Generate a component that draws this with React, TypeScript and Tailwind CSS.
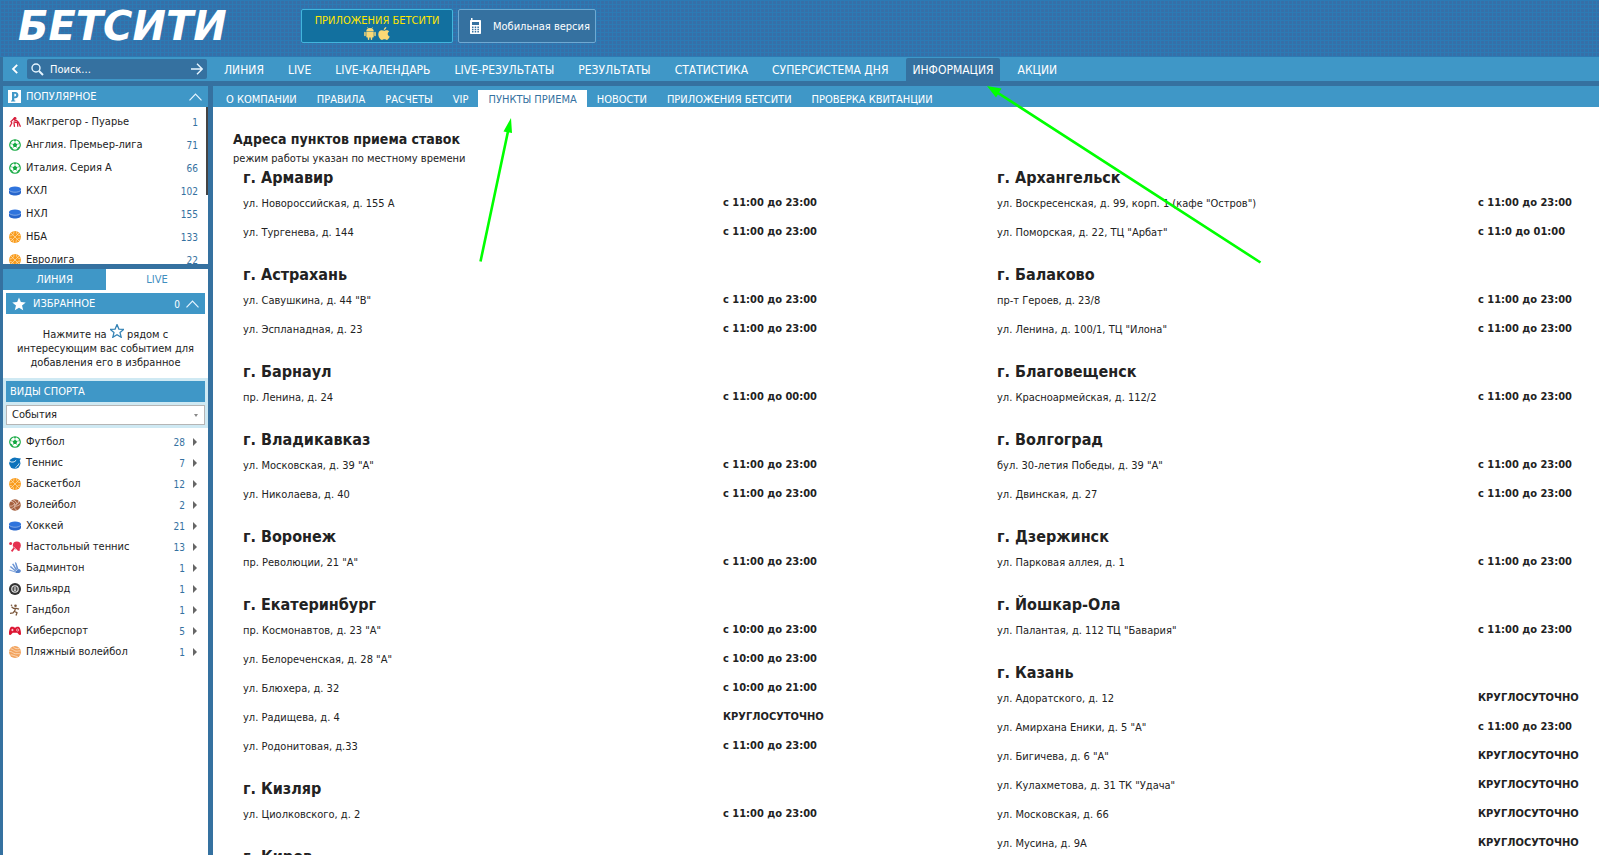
import type { ReactNode } from "react";

type Point = [address: string, hours: string];
type City = { name: string; points: Point[] };

const DAY = "с 11:00 до 23:00";
const ALL_DAY = "КРУГЛОСУТОЧНО";

const leftCities: City[] = [
  { name: "г. Армавир", points: [["ул. Новороссийская, д. 155 А", DAY], ["ул. Тургенева, д. 144", DAY]] },
  { name: "г. Астрахань", points: [['ул. Савушкина, д. 44 "В"', DAY], ["ул. Эспланадная, д. 23", DAY]] },
  { name: "г. Барнаул", points: [["пр. Ленина, д. 24", "с 11:00 до 00:00"]] },
  { name: "г. Владикавказ", points: [['ул. Московская, д. 39 "А"', DAY], ["ул. Николаева, д. 40", DAY]] },
  { name: "г. Воронеж", points: [['пр. Революции, 21 "А"', DAY]] },
  {
    name: "г. Екатеринбург",
    points: [
      ['пр. Космонавтов, д. 23 "А"', "с 10:00 до 23:00"],
      ['ул. Белореченская, д. 28 "А"', "с 10:00 до 23:00"],
      ["ул. Блюхера, д. 32", "с 10:00 до 21:00"],
      ["ул. Радищева, д. 4", ALL_DAY],
      ["ул. Родонитовая, д.33", DAY],
    ],
  },
  { name: "г. Кизляр", points: [["ул. Циолковского, д. 2", DAY]] },
  { name: "г. Киров", points: [] },
];

const rightCities: City[] = [
  {
    name: "г. Архангельск",
    points: [
      ['ул. Воскресенская, д. 99, корп. 1 (кафе "Остров")', DAY],
      ['ул. Поморская, д. 22, ТЦ "Арбат"', "с 11:0 до 01:00"],
    ],
  },
  { name: "г. Балаково", points: [["пр-т Героев, д. 23/8", DAY], ['ул. Ленина, д. 100/1, ТЦ "Илона"', DAY]] },
  { name: "г. Благовещенск", points: [["ул. Красноармейская, д. 112/2", DAY]] },
  { name: "г. Волгоград", points: [['бул. 30-летия Победы, д. 39 "А"', DAY], ["ул. Двинская, д. 27", DAY]] },
  { name: "г. Дзержинск", points: [["ул. Парковая аллея, д. 1", DAY]] },
  { name: "г. Йошкар-Ола", points: [['ул. Палантая, д. 112 ТЦ "Бавария"', DAY]] },
  {
    name: "г. Казань",
    points: [
      ["ул. Адоратского, д. 12", ALL_DAY],
      ['ул. Амирхана Еники, д. 5 "А"', DAY],
      ['ул. Бигичева, д. 6 "А"', ALL_DAY],
      ['ул. Кулахметова, д. 31 ТК "Удача"', ALL_DAY],
      ["ул. Московская, д. 66", ALL_DAY],
      ["ул. Мусина, д. 9А", ALL_DAY],
    ],
  },
];

const mainNav = ["ЛИНИЯ", "LIVE", "LIVE-КАЛЕНДАРЬ", "LIVE-РЕЗУЛЬТАТЫ", "РЕЗУЛЬТАТЫ", "СТАТИСТИКА", "СУПЕРСИСТЕМА ДНЯ", "ИНФОРМАЦИЯ", "АКЦИИ"];
const subNav = ["О КОМПАНИИ", "ПРАВИЛА", "РАСЧЕТЫ", "VIP", "ПУНКТЫ ПРИЕМА", "НОВОСТИ", "ПРИЛОЖЕНИЯ БЕТСИТИ", "ПРОВЕРКА КВИТАНЦИИ"];

function Icon({ children }: { children: ReactNode }) {
  return (
    <svg viewBox="0 0 12 12" className="size-3 shrink-0" fill="none" aria-hidden="true">
      {children}
    </svg>
  );
}

const Football = () => (
  <Icon>
    <circle cx="6" cy="6" r="5.3" stroke="#12a83f" strokeWidth="1.1" />
    <path d="M6 3.7 8.2 5.3 7.4 7.9H4.6L3.8 5.3Z" fill="#12a83f" />
    <path d="M6 .8V3.7M8.2 5.3 11 4.4M7.4 7.9 9 10.3M4.6 7.9 3 10.3M3.8 5.3 1 4.4" stroke="#12a83f" strokeWidth=".6" />
    <path d="M4.2.9 6 2 7.8.9ZM1 7.5l1.8.6.4 2.2ZM11 7.5l-1.8.6-.4 2.2Z" fill="#12a83f" />
  </Icon>
);
const Puck = () => (
  <Icon>
    <path d="M0 4.2v3.6C0 9.300 2.700 10.500 6 10.500s6-1.200 6-2.700V4.200Z" fill="#2766cc" />
    <ellipse cx="6" cy="4.2" rx="6" ry="2.600" fill="#2f74dd" />
    <path d="M.2 5.200C1 6.400 3.300 7.200 6 7.200s5-.8 5.800-2" stroke="#a9c8f5" strokeWidth=".7" />
  </Icon>
);
const Basketball = () => (
  <Icon>
    <circle cx="6" cy="6" r="6" fill="#f99b1c" />
    <path d="M2 2 10 10M10 2 2 10M.3 5C3 5.400 5.400 3 5 .3M11.700 7C9 6.600 6.600 9 7 11.700M7.500.4C7.200 3 9 4.900 11.600 4.700M4.500 11.600C4.800 9 3 7.100.4 7.300" stroke="#ffe3b5" strokeWidth=".7" />
  </Icon>
);
const Tennis = () => (
  <Icon>
    <circle cx="5.800" cy="6.200" r="5.600" fill="#0d73bb" />
    <path d="M.2 4.200C3 5.800 5.400 5.300 7.200 3.200" stroke="#fff" strokeWidth=".9" />
    <path d="M6.500 10.500C7.500 10 9.500 8 10 6.500" stroke="#fff" strokeWidth=".9" />
    <path d="M7.500 1 12 1.500 10 4.600Z" fill="#0d73bb" />
  </Icon>
);
const Volleyball = () => (
  <Icon>
    <circle cx="6" cy="6" r="5.800" fill="#a5603e" />
    <path d="M6 6C5.500 3.500 3.500 2 1.500 2.500M6 6C8.500 5.500 10 3.500 9.500 1.500M6 6C5 8.500 6 10.500 8 11.500M4 .8C6 1.500 7.500 3 7.800 5M11.500 5C9.500 6.800 7.500 7.300 5.500 7.200M.6 7C3 7.500 4.600 6.500 5.600 4.600M2 10C3 9.800 4.200 9 5 7.800" stroke="#f3ddd0" strokeWidth=".7" />
  </Icon>
);
const TableTennis = () => (
  <Icon>
    <circle cx="7.800" cy="4.600" r="4" fill="#e5304f" />
    <path d="M7.500 8 10.500 7 11 9.500 9 10Z" fill="#e5304f" />
    <path d="M5 7.300 2.600 10.400" stroke="#e5304f" strokeWidth="1.800" />
    <circle cx="1.600" cy="2.400" r="1.500" fill="#e5304f" />
    <path d="M4.300 5.700 7.700 8.700" stroke="#fff" strokeWidth=".6" />
  </Icon>
);
const Badminton = () => (
  <Icon>
    <path d="M5.800.3 7.300.8 9.500 7 7.800 7.800ZM3 2 4.600 1.600 8 7.600 6.800 8.400ZM.8 5 2 4 7 8.500 6.300 9.500ZM0 8.500.8 7.400 6.500 9.600 6.300 10.600Z" fill="#86a9df" />
    <path d="M6.500.5 8.700 7.500M3.800 2 7.500 8M1.400 4.700 6.700 9" stroke="#4f7cc4" strokeWidth=".5" />
    <path d="M6.500 9.500 9.500 7C11 7 12 8 11.800 9.200 11.500 10.800 9 11.600 6.500 10.800Z" fill="#5583cc" />
  </Icon>
);
const Billiards = () => (
  <Icon>
    <circle cx="6" cy="6" r="6" fill="#333" />
    <circle cx="6" cy="6" r="3.800" fill="#e8e8e8" />
    <circle cx="6" cy="6" r="2.700" fill="#555" />
    <circle cx="6" cy="5" r=".8" fill="#fff" />
    <circle cx="6" cy="7.100" r=".9" fill="#fff" />
  </Icon>
);
const Handball = () => (
  <Icon>
    <circle cx="6.500" cy="1.700" r="1.300" fill="#7a563a" />
    <circle cx="2.500" cy="1.200" r=".8" fill="#7a563a" />
    <path d="M2.500 2.800 4.500 4.300H7.300L10 5.200M6.400 4.300 5.600 7.400 8 8.800 7 11.500M5.500 7.200 4 9 1 9.400" stroke="#7a563a" strokeWidth="1.300" />
  </Icon>
);
const Gamepad = () => (
  <Icon>
    <path d="M2.400 1.700h2l.6.8h2l.6-.8h2C11 2 12 5.500 12 8.500c0 2-1.800 2.100-2.600.5L8.300 7.700H3.700L2.600 9C1.800 10.600 0 10.500 0 8.500 0 5.500 1 2 2.400 1.700Z" fill="#dc1431" />
    <path d="M2.200 5h2.400M3.400 3.800v2.400" stroke="#fff" strokeWidth=".7" />
    <circle cx="8.600" cy="5" r="1.100" stroke="#fff" strokeWidth=".6" />
  </Icon>
);
const BeachVolleyball = () => (
  <Icon>
    <circle cx="6" cy="6" r="6" fill="#f2a25c" />
    <path d="M1.500 2.800C4 2.800 5 5 7 5.200S10 4.500 11.600 5M.3 5.500C3 5 4 7.500 6.500 7.700S9.500 7.200 11.300 8M1.500 9C3 8.300 5 10 8.800 10.700M4 .5C6 2.800 8 3 10.500 2.500" stroke="#fde3ca" strokeWidth=".8" />
  </Icon>
);
const Fight = () => (
  <Icon>
    <path d="M.8 10.800 2.800 7 2 5.600 5.200 2.500 6 4.500 7.500 4.500 9.500 6.500 11.500 10.800" stroke="#d81f3c" strokeWidth="1.300" />
    <circle cx="6" cy="2.300" r="1.400" fill="#d81f3c" />
    <path d="M4.500 6 8.500 6.500 8.800 10.800M5 7 5.500 10.800" stroke="#d81f3c" strokeWidth="1.300" />
  </Icon>
);

const popular: [ReactNode, string, number][] = [
  [<Fight />, "Макгрегор - Пуарье", 1],
  [<Football />, "Англия. Премьер-лига", 71],
  [<Football />, "Италия. Серия А", 66],
  [<Puck />, "КХЛ", 102],
  [<Puck />, "НХЛ", 155],
  [<Basketball />, "НБА", 133],
  [<Basketball />, "Евролига", 22],
];

const sports: [ReactNode, string, number][] = [
  [<Football />, "Футбол", 28],
  [<Tennis />, "Теннис", 7],
  [<Basketball />, "Баскетбол", 12],
  [<Volleyball />, "Волейбол", 2],
  [<Puck />, "Хоккей", 21],
  [<TableTennis />, "Настольный теннис", 13],
  [<Badminton />, "Бадминтон", 1],
  [<Billiards />, "Бильярд", 1],
  [<Handball />, "Гандбол", 1],
  [<Gamepad />, "Киберспорт", 5],
  [<BeachVolleyball />, "Пляжный волейбол", 1],
];

const STAR = "M12 1 15.200 8.700 23.500 9.300 17.200 14.700 19.200 22.800 12 18.400 4.800 22.800 6.800 14.700.5 9.300 8.800 8.700Z";

function Chevron() {
  return (
    <svg viewBox="0 0 13 8" className="h-2 w-[13px]" fill="none" stroke="#e6f5ff" strokeWidth="1.200" aria-hidden="true">
      <path d="M.5 7.300 6.500 1.200 12.500 7.300" />
    </svg>
  );
}

function Header() {
  return (
    <header className="flex h-[57px] shrink-0 items-start bg-[#366fa8] bg-[linear-gradient(to_right,#2c7ab4_1px,transparent_1px),linear-gradient(#2c7ab4_1px,transparent_1px)] bg-[length:4px_4px]">
      <a href="#" className="mt-1 ml-[18px] flex h-11 w-[283px] items-center font-['DejaVu_Sans',sans-serif] text-[40px] font-bold text-white italic">
        БЕТСИТИ
      </a>
      <a href="#" className="mt-[9px] flex h-[34px] w-[152px] flex-col items-center rounded-xs border border-[#42b5dc] bg-[#12709f] pt-[3px] text-[11px] leading-[15px] text-[#ffe600]">
        ПРИЛОЖЕНИЯ БЕТСИТИ
        <span className="-mt-px flex gap-0.5">
          <svg viewBox="0 0 12 13" className="h-[13px] w-3" fill="#fbd875" aria-hidden="true">
            <path d="M2.300 4.200C2.300 2.800 3 2 3.900 1.500L3.200.4 3.600.1 4.400 1.300a4.400 4.400 0 0 1 3.200 0L8.400.1l.4.3-.7 1.100c.9.5 1.600 1.300 1.600 2.700ZM2.300 4.800h7.400v5c0 .5-.3.7-.7.700H8.200v1.700c0 1-1.500 1-1.500 0v-1.700H5.300v1.700c0 1-1.500 1-1.500 0v-1.700H3c-.4 0-.7-.2-.7-.7ZM.2 5.400c0-.9 1.500-.9 1.500 0v3.200c0 .9-1.500.9-1.500 0ZM10.300 5.400c0-.9 1.500-.9 1.500 0v3.200c0 .9-1.500.9-1.500 0Z" />
          </svg>
          <svg viewBox="0 0 12 13" className="h-[13px] w-3" fill="#fbd875" aria-hidden="true">
            <path d="M8.300 0c.1 1.500-1 2.900-2.500 3C5.700 1.600 6.900.2 8.300 0ZM6.200 3.800c.6 0 1.300-.6 2.500-.6 1 0 1.900.5 2.500 1.300-2.200 1.300-1.800 4.200.6 5.100-.5 1.300-1.600 3.200-2.900 3.300-1 0-1.300-.6-2.500-.6-1.100 0-1.500.6-2.400.6C2.300 12.800.3 10 .3 7.200c0-2.600 1.700-3.900 3.300-3.900 1.100 0 1.900.5 2.600.5Z" />
          </svg>
        </span>
      </a>
      <a href="#" className="mt-[9px] ml-[5px] flex h-[34px] w-[138px] items-center gap-3 rounded-xs border border-[#6fa9d2] bg-[#3571a0] pl-[11px] text-[11px] whitespace-nowrap text-white">
        <svg viewBox="0 0 11 16" className="h-4 w-[11px] shrink-0" aria-hidden="true">
          <path d="M1 0h1.500v2H10c.6 0 1 .4 1 1v12c0 .6-.4 1-1 1H1c-.6 0-1-.4-1-1V3c0-.6.4-1 1-1Z" fill="#fff" />
          <path d="M2 4h7v3H2ZM2 8.500h1.500V10H2ZM4.700 8.500h1.500V10H4.700ZM7.400 8.500h1.500V10H7.400ZM2 10.800h1.500v1.400H2ZM4.700 10.800h1.500v1.400H4.700ZM7.400 10.800h1.500v1.400H7.400ZM2 13h1.500v1.400H2ZM4.700 13h1.500v1.400H4.700ZM7.400 13h1.500v1.400H7.400Z" fill="#3571a0" />
        </svg>
        <span className="pt-0.5">Мобильная версия</span>
      </a>
    </header>
  );
}

function NavBar() {
  return (
    <div className="ml-[3px] flex h-6 shrink-0 bg-[#3f97c7]">
      <div className="flex w-[209px] shrink-0 items-center">
        <button type="button" aria-label="Свернуть" className="flex w-6 justify-center">
          <svg viewBox="0 0 8 10" className="h-[10px] w-2" fill="none" stroke="#fff" strokeWidth="1.800" aria-hidden="true">
            <path d="M6.200.8 2 5 6.200 9.200" />
          </svg>
        </button>
        <form className="flex h-5 w-[180px] items-center rounded-xs bg-[#3571a0] px-1">
          <svg viewBox="0 0 13 13" className="size-[13px] shrink-0" fill="none" stroke="#e6f5ff" aria-hidden="true">
            <circle cx="5" cy="5" r="4" strokeWidth="1.400" />
            <path d="M8 8 12 12" strokeWidth="2" />
          </svg>
          <input aria-label="Поиск" placeholder="Поиск..." className="ml-[6px] w-0 flex-1 pt-0.5 text-[11px] text-white outline-none placeholder:text-white" />
          <button type="submit" aria-label="Найти">
            <svg viewBox="0 0 12 12" className="size-3" fill="none" stroke="#e6f5ff" strokeWidth="1.400" aria-hidden="true">
              <path d="M0 6H11M6 .8 11.200 6 6 11.200" />
            </svg>
          </button>
        </form>
      </div>
      <nav className="flex items-end gap-3 pl-[6px] text-[12px] whitespace-nowrap text-white">
        {mainNav.map((item) => (
          <a
            key={item}
            href="#"
            className={
              item === "ИНФОРМАЦИЯ"
                ? "flex h-[23px] items-center rounded-t-xs bg-[#3571a0] px-[6px]"
                : "flex h-[23px] items-center px-[6px]"
            }
          >
            {item}
          </a>
        ))}
      </nav>
    </div>
  );
}

function Sidebar() {
  return (
    <aside className="flex w-[213px] shrink-0 flex-col pr-[5px] pl-[3px] text-[11px] text-[#222]">
      <h2 className="flex h-[21px] shrink-0 items-center bg-[#3f97c7] pr-[6px] pl-[5px] text-white">
        <svg viewBox="0 0 13 13" className="mr-[5px] size-[13px]" aria-hidden="true">
          <path d="M0 0H13V13H0Z" fill="#fff" />
          <path d="M4 2H7.300C11.500 2 11.500 8.300 7.300 8.300H6.300V10.500H7.300V11.500H3V10.500H4ZM6.300 3.800V6.500H7C8.600 6.500 8.600 3.800 7 3.800Z" fill="#3f97c7" fillRule="evenodd" />
        </svg>
        <span className="pt-0.5">ПОПУЛЯРНОЕ</span>
        <span className="ml-auto">
          <Chevron />
        </span>
      </h2>
      <div className="relative h-[157px] shrink-0 overflow-hidden bg-white pt-[3px]">
        <ul>
          {popular.map(([icon, name, count]) => (
            <li key={name}>
              <a href="#" className="flex h-[23px] items-center gap-[5px] pr-[10px] pl-[6px]">
                {icon}
                <span className="pt-0.5">{name}</span>
                <span className="ml-auto pt-0.5 text-[10px] text-[#3571a0]">{count}</span>
              </a>
            </li>
          ))}
        </ul>
        <span className="absolute top-0 right-0 h-[88px] w-0.5 bg-[#444]" />
      </div>

      <div className="mt-[5px] flex h-[21px] shrink-0">
        <button type="button" className="w-[103px] bg-[#3f97c7] pt-0.5 text-white">ЛИНИЯ</button>
        <button type="button" className="flex-1 bg-white pt-0.5 text-[#3f8fbf]">LIVE</button>
      </div>
      <section className="shrink-0 bg-white px-[3px] pt-[3px] pb-2">
        <h2 className="flex h-[21px] items-center bg-[#3f97c7] pr-[6px] pl-[6px] text-white">
          <svg viewBox="0 0 24 24" className="mr-[7px] size-[14px]" fill="#fff" aria-hidden="true">
            <path d={STAR} />
          </svg>
          <span className="pt-0.5">ИЗБРАННОЕ</span>
          <span className="mr-[6px] ml-auto pt-0.5 text-[10px]">0</span>
          <Chevron />
        </h2>
        <p className="pt-[14px] text-center leading-[14px]">
          Нажмите на{" "}
          <svg viewBox="0 0 24 24" className="inline size-[14px] -translate-y-1" fill="none" stroke="#3583b5" strokeWidth="2.200" aria-hidden="true">
            <path d={STAR} />
          </svg>{" "}
          рядом с<br />
          интересующим вас событием для
          <br />
          добавления его в избранное
        </p>
      </section>
      <section className="shrink-0 bg-[#cfe9f3] p-[3px]">
        <h2 className="flex h-[21px] items-center bg-[#3f97c7] pl-1 text-white">
          <span className="pt-0.5">ВИДЫ СПОРТА</span>
        </h2>
        <div className="relative mt-[3px]">
          <select aria-label="Тип событий" className="block h-5 w-full appearance-none border border-[#b5b5b5] bg-white pl-[5px] text-[11px]">
            <option>События</option>
          </select>
          <span className="pointer-events-none absolute top-[9px] right-[7px] border-x-2 border-t-3 border-x-transparent border-t-[#888]" />
        </div>
      </section>
      <ul className="flex-1 bg-white pt-[3px]">
        {sports.map(([icon, name, count]) => (
          <li key={name}>
            <a href="#" className="flex h-[21px] items-center gap-[5px] pr-[11px] pl-[6px]">
              {icon}
              <span className="pt-0.5">{name}</span>
              <span className="ml-auto pt-0.5 text-[10px] text-[#3571a0]">{count}</span>
              <span className="ml-[3px] border-y-4 border-l-4 border-y-transparent border-l-[#666]" />
            </a>
          </li>
        ))}
      </ul>
    </aside>
  );
}

function CityTable({ cities, label, hoursCol }: { cities: City[]; label: string; hoursCol: string }) {
  return (
    <table aria-label={label} className="w-full table-fixed text-left text-[11px] text-[#222]">
      <colgroup>
        <col />
        <col className={hoursCol} />
      </colgroup>
      {cities.map((city, i) => (
        <tbody key={city.name}>
          <tr>
            <th colSpan={2} scope="rowgroup" className={i === 0 ? "text-[16px] leading-[24px] font-bold" : "pt-[15px] text-[16px] leading-[24px] font-bold"}>
              {city.name}
            </th>
          </tr>
          {city.points.map(([address, hours]) => (
            <tr key={address} className="h-[29px]">
              <td>{address}</td>
              <td className="pb-0.5 font-bold">{hours}</td>
            </tr>
          ))}
        </tbody>
      ))}
    </table>
  );
}

function Arrows() {
  return (
    <svg className="pointer-events-none absolute top-0 left-0 h-[280px] w-[1300px]" fill="#0f0" stroke="#0f0" aria-hidden="true">
      <path d="M480.500 261.500 508.500 129M1260.500 262.500 998 93" strokeWidth="2.600" />
      <path d="M511 118 512 133 503.500 131.500ZM987 86 1001.500 88.500 996 97.500Z" stroke="none" />
    </svg>
  );
}

export default function App() {
  return (
    <div className="relative flex h-screen flex-col overflow-hidden bg-[#3571a0] font-['DejaVu_Sans_Condensed','DejaVu_Sans',sans-serif]">
      <Header />
      <NavBar />
      <div className="mt-[5px] flex min-h-0 flex-1">
        <Sidebar />
        <div className="flex min-w-0 flex-1 flex-col bg-white">
          <nav className="flex h-[21px] shrink-0 items-end bg-[#3f97c7] pl-[3px] text-[11px] whitespace-nowrap text-white">
            {subNav.map((item) => (
              <a
                key={item}
                href="#"
                className={
                  item === "ПУНКТЫ ПРИЕМА"
                    ? "flex h-[17px] items-center bg-white px-[10px] pt-[3px] text-[#3571a0]"
                    : "flex h-[17px] items-center px-[10px] pt-[3px]"
                }
              >
                {item}
              </a>
            ))}
          </nav>
          <main className="min-h-0 flex-1 [scrollbar-width:none] overflow-auto pt-[22px] pl-5 text-[#222]">
            <h1 className="text-[14px] leading-[20px] font-bold">Адреса пунктов приема ставок</h1>
            <p className="pt-0.5 text-[11px] leading-[15px]">режим работы указан по местному времени</p>
            <div className="grid grid-cols-[754fr_602fr] items-start pl-[10px]">
              <CityTable cities={leftCities} label="Пункты приема, левая колонка" hoursCol="w-[274px]" />
              <CityTable cities={rightCities} label="Пункты приема, правая колонка" hoursCol="w-[121px]" />
            </div>
          </main>
        </div>
      </div>
      <Arrows />
    </div>
  );
}
